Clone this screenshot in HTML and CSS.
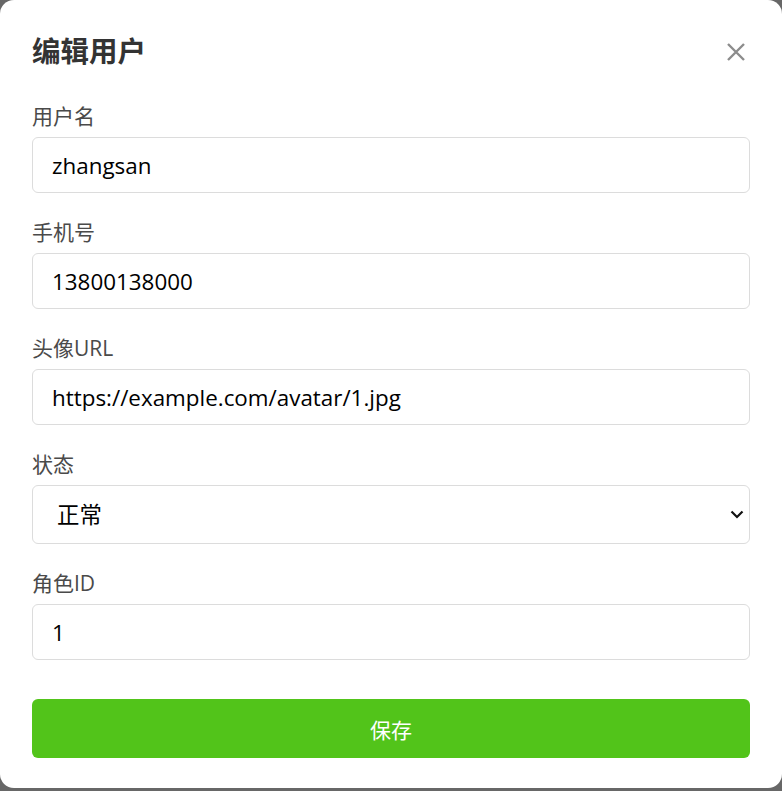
FILE: index.html
```html
<!DOCTYPE html>
<html lang="zh-CN">
<head>
<meta charset="utf-8">
<title>编辑用户</title>
<link rel="stylesheet" href="styles.css">
</head>
<body>
<div class="modal">
  <div class="modal-header">
    <h2 class="modal-title">编辑用户</h2>
    <button class="close-btn" type="button" aria-label="关闭">
      <svg width="20" height="20" viewBox="0 0 20 20"><path d="M2 2 L18 18 M18 2 L2 18" stroke="#8c8c8c" stroke-width="2.4" fill="none"/></svg>
    </button>
  </div>
  <form class="form">
    <div class="field">
      <label class="label">用户名</label>
      <input class="input" type="text" value="zhangsan">
    </div>
    <div class="field">
      <label class="label">手机号</label>
      <input class="input" type="text" value="13800138000">
    </div>
    <div class="field">
      <label class="label">头像URL</label>
      <input class="input" type="text" value="https://example.com/avatar/1.jpg">
    </div>
    <div class="field">
      <label class="label">状态</label>
      <div class="select-wrap">
        <select class="input select">
          <option>正常</option>
          <option>禁用</option>
        </select>
        <svg class="chevron" width="14" height="9" viewBox="0 0 14 9"><path d="M1.5 1.5 L7 7 L12.5 1.5" stroke="#111" stroke-width="2.2" fill="none"/></svg>
      </div>
    </div>
    <div class="field">
      <label class="label">角色ID</label>
      <input class="input" type="text" value="1">
    </div>
    <button class="save-btn" type="button">保存</button>
  </form>
</div>
</body>
</html>
```

FILE: styles.css
```css
html, body {
  margin: 0;
  padding: 0;
}
body {
  background: #676767;
  width: 782px;
  height: 791px;
  font-family: "Open Sans", "Noto Sans CJK SC", sans-serif;
}
.modal {
  box-sizing: border-box;
  width: 782px;
  height: 788px;
  background: #fff;
  border-radius: 14px;
  padding: 30px 32px 30px 32px;
}
.modal-header {
  display: flex;
  align-items: center;
  justify-content: space-between;
  height: 42px;
  margin-bottom: 29px;
}
.modal-title {
  margin: 0;
  font-size: 28.5px;
  line-height: 42px;
  font-weight: 700;
  color: #333;
}
.close-btn {
  border: 0;
  background: none;
  padding: 0;
  margin-right: 4px;
  margin-top: 2px;
  width: 20px;
  height: 20px;
  display: flex;
  cursor: pointer;
}
.form {
  display: flex;
  flex-direction: column;
  gap: 24px;
}
.field {
  display: flex;
  flex-direction: column;
  gap: 6px;
}
.label {
  font-size: 21px;
  line-height: 30px;
  color: #4a4a4a;
}
.input {
  box-sizing: border-box;
  width: 100%;
  height: 56px;
  border: 1px solid #dcdcdc;
  border-radius: 6px;
  padding: 0 19px;
  font-family: "Open Sans", "Noto Sans CJK SC", sans-serif;
  font-size: 22.4px;
  color: #000;
  background: #fff;
  outline: none;
}
.select-wrap {
  position: relative;
}
.select {
  -webkit-appearance: none;
  appearance: none;
  height: 59px;
  padding: 0 40px 0 24px;
  display: block;
}
.chevron {
  position: absolute;
  right: 6px;
  top: 25px;
  pointer-events: none;
}
.save-btn {
  margin-top: 15px;
  height: 59px;
  border: 0;
  border-radius: 6px;
  background: #52c41a;
  color: #fff;
  font-family: "Open Sans", "Noto Sans CJK SC", sans-serif;
  font-size: 21px;
  cursor: pointer;
}
```
